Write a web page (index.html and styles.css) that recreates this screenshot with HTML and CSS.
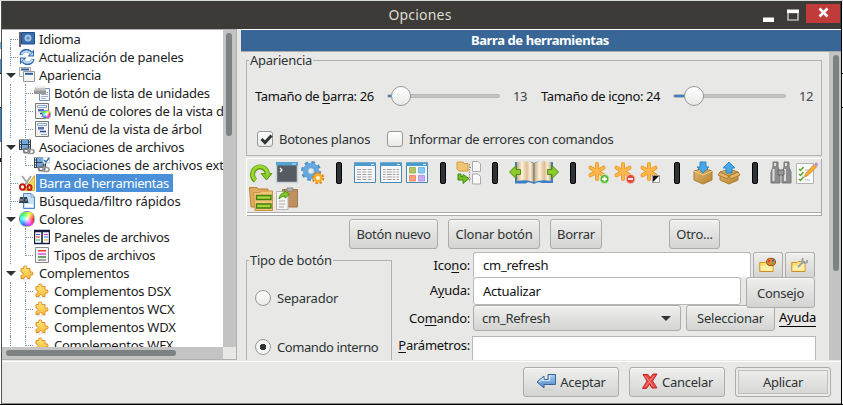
FILE: index.html
```html
<!DOCTYPE html>
<html lang="es">
<head>
<meta charset="utf-8">
<title>Opciones</title>
<link rel="stylesheet" href="styles.css">
</head>
<body>
<svg width="0" height="0" class="defs">
  <defs>
    <linearGradient id="gBlue" x1="0" y1="0" x2="0" y2="1"><stop offset="0" stop-color="#a9cdf0"/><stop offset="1" stop-color="#4d86c6"/></linearGradient>
    <linearGradient id="gGold" x1="0" y1="0" x2="0" y2="1"><stop offset="0" stop-color="#ffe97a"/><stop offset="1" stop-color="#f9bd3a"/></linearGradient>
    <linearGradient id="gBox" x1="0" y1="0" x2="1" y2="1"><stop offset="0" stop-color="#e2b970"/><stop offset="1" stop-color="#b98230"/></linearGradient>
    <linearGradient id="gPage" x1="0" y1="0" x2="1" y2="0"><stop offset="0" stop-color="#d3ae7c"/><stop offset=".3" stop-color="#fbf0dc"/><stop offset=".6" stop-color="#dcbf93"/><stop offset=".8" stop-color="#fbf0dc"/><stop offset="1" stop-color="#cba56e"/></linearGradient>
    <symbol id="puzzle" viewBox="0 0 16 16"><path d="M2.500 3.500H4.500C5 3 4.200 2.500 4.700 1.500Q6.200 .2 7.700 1.500C8.200 2.500 7.300 3 7.800 3.500H11V7C11.500 7.500 12.500 6.500 13.500 7Q14.500 8.500 13.500 10C12.500 10.500 11.500 9.500 11 10V13.500H8.500C8 13 8.500 12.200 7.500 11.700Q6 11.200 5.500 12.200C5.300 13 5.500 13.500 5 13.500H2V10.500C2.500 10 3.500 10.500 4 9.500Q4.300 8 3.500 7.500C2.500 7 2.500 7.500 2 7V3.500Z" fill="url(#gGold)" stroke="#e0882c"/><path d="M2 14.800H12" stroke="#0002"/></symbol>
    <symbol id="film" viewBox="0 0 16 16"><path d="M0 .5H12V11H0Z" fill="#34414d"/><path d="M3 1H9V5H3ZM3 6H9V10.500H3Z" fill="#6fa6dc"/><path d="M1.500 1V11M10.500 1V11" stroke="#eef2f5" stroke-dasharray="1.500 1"/><rect x="4.700" y="9.700" width="6" height="4" rx="2" fill="none" stroke="#777" stroke-width="1.700"/><rect x="9" y="10.500" width="6" height="4" rx="2" fill="none" stroke="#999" stroke-width="1.700"/></symbol>
    <symbol id="treemenu" viewBox="0 0 16 16"><path d="M1.500 .5H14.500V15.500H1.500Z" fill="#f2f2f2" stroke="#777"/><path d="M3.500 2.500H12.500V4.500H3.500Z" fill="#fff" stroke="#8ba5c6"/><path d="M4 7H10M6 10.500H12" stroke="#1f47a8" stroke-width="1.700"/><path d="M4 8.700H10M7 13.500H13" stroke="#9ca5b5"/></symbol>
    <symbol id="wheelmark" viewBox="0 0 26 26"><path d="M12 4V19M5.500 7.700L18.500 15.300M18.500 7.700L5.500 15.300" stroke="#eb9427" stroke-width="4" stroke-linecap="round"/><path d="M12 4V19M5.500 7.700L18.500 15.300M18.500 7.700L5.500 15.300" stroke="#fdb84b" stroke-width="2.500" stroke-linecap="round"/></symbol>
    <symbol id="win" viewBox="0 0 26 26"><path d="M2.500 3H23.500V22.500H2.500Z" fill="#f7f7f7" stroke="#4489b8"/><path d="M2 2.500H24V6H2Z" fill="#4a9acb"/><path d="M19 4.500H22" stroke="#d8ecf8"/></symbol>
    <symbol id="folder" viewBox="0 0 16 16"><path d="M.8 5.500H6L7 4.500H14V14.500H.8Z" fill="url(#gGold)" stroke="#d18b22"/><path d="M1.500 8.500H6L7.500 7H13.500V14H1.500Z" fill="#fff0a6"/></symbol>
  </defs>
</svg>
<div class="desktop">
<div class="window">
  <header class="titlebar">
    <span class="title">Opciones</span>
    <div class="controls">
      <svg class="minmax" width="40" height="28"><path d="M1 16.500H12V21H1Z" fill="#fff"/><path d="M26 11.500H36V19H26Z" fill="none" stroke="#b8b8b5" stroke-width="1.700"/><path d="M25 8.500H37V12H25Z" fill="#fff"/></svg>
      <span class="close"><svg width="34" height="19"><path d="M13.500 4.500L21.500 12.500M21.500 4.500L13.500 12.500" stroke="#fff" stroke-width="2.600"/></svg></span>
    </div>
  </header>
  <div class="main">
    <aside class="sidebar">
      <div class="tree-row">
        <ul class="tree">
          <li class="l1 first"><svg class="ic" viewBox="0 0 16 16"><path d="M1 1V16" stroke="#666" stroke-width="2"/><path d="M2.500 1.500H15.500V13H2.500Z" fill="#376cae" stroke="#1f4e8a"/><circle cx="9" cy="7" r="3.500" fill="#a8c7e8"/><circle cx="9" cy="7" r="1.500" fill="#5384bd"/></svg><span>Idioma</span></li>
          <li class="l1"><svg class="ic" viewBox="0 0 16 16"><path d="M2 6C3 1 9 0 12 4M14 10C13 15 7 16 4 12" fill="none" stroke="#2d65a8" stroke-width="3.400"/><path d="M15 .5V7.500H8.500ZM1 15.500V8.500H7.500Z" fill="#2d65a8"/><path d="M2.500 5.500C4 2 9 1 12 4.500M13.500 10.500C12 14 7 15 4 11.500" fill="none" stroke="#b9d8f5" stroke-width="2"/><path d="M14 3V6.500H10.800ZM2 13V9.500H5.200Z" fill="#b9d8f5"/></svg><span class="sp-wide">Actualización de paneles</span></li>
          <li class="l1 open"><svg class="ic" viewBox="0 0 16 16"><path d="M.5 .5H11.500V9.500H.5Z" fill="#f4f4f2" stroke="#aaa"/><path d="M2 2.500H10" stroke="#2a5c9e" stroke-width="2"/><path d="M4.500 4.500H15.500V14.500H4.500Z" fill="#f4f4f2" stroke="#999"/><path d="M6 6.800H14" stroke="#2a5c9e" stroke-width="2"/></svg><span>Apariencia</span></li>
          <li class="l2"><svg class="ic" viewBox="0 0 16 16"><path d="M5.500 3.500H15.500V15.500H5.500Z" fill="#fff" stroke="#6d8fba"/><path d="M7 7.500H14M7 9.500H14M7 11.500H14M7 13.500H12" stroke="#9fb0c8"/><path d="M2 1H10L12 5V9H0V5Z" fill="#c6c6c4"/><path d="M2 2H10" stroke="#eee" stroke-width="2"/><path d="M0 5.500H12V9H0Z" fill="#999"/></svg><span>Botón de lista de unidades</span></li>
          <li class="l2"><svg class="ic"><use href="#treemenu"/></svg><i class="mini-wheel"></i><span>Menú de colores de la vista de árbol</span></li>
          <li class="l2"><svg class="ic"><use href="#treemenu"/></svg><span class="sp-wide">Menú de la vista de árbol</span></li>
          <li class="l1 open"><svg class="ic"><use href="#film"/></svg><span>Asociaciones de archivos</span></li>
          <li class="l2 only"><svg class="ic" viewBox="0 0 16 16"><use href="#film"/><path d="M9 0H15.500V6H9Z" fill="#fff" stroke="#acc3da"/><path d="M10 3L12 5L15 1" fill="none" stroke="#3269a7" stroke-width="1.300"/></svg><span class="sp-ext">Asociaciones de archivos extra</span></li>
          <li class="l1"><svg class="ic" viewBox="0 0 16 16"><path d="M15.500 .5V15.500H5Z" fill="#f5d765" stroke="#ddb22a"/><path d="M3 1L10 10M12 1L6 10" stroke="#aaa" stroke-width="2"/><ellipse cx="3.500" cy="12" rx="2.500" ry="2.800" fill="none" stroke="#c41a12" stroke-width="2"/><ellipse cx="10.500" cy="12.500" rx="2" ry="2.500" fill="none" stroke="#c41a12" stroke-width="2"/></svg><span class="selected">Barra de herramientas</span></li>
          <li class="l1"><svg class="ic" viewBox="0 0 16 16"><path d="M4.500 .5H12L15.500 4V15.500H4.500Z" fill="#c2e0fb" stroke="#4d8acb"/><path d="M6 12.500H14" stroke="#fff" stroke-width="3"/><path d="M12 .5V4H15.500Z" fill="#fff" stroke="#6da0d4"/><path d="M1 4H4L5 10H0ZM5 4H8L9.500 10H5Z" fill="#39434e"/><path d="M1 7H4M6 7H8" stroke="#adb5bd"/></svg><span class="sp-search">Búsqueda/filtro rápidos</span></li>
          <li class="l1 open"><i class="ic wheel"></i><span>Colores</span></li>
          <li class="l2"><svg class="ic" viewBox="0 0 16 16"><path d="M.5 1.500H15.500V14.500H.5Z" fill="#fff" stroke="#162044" stroke-width="1.400"/><path d="M.5 2.500H15.500M8 2V15" stroke="#162044" stroke-width="1.600"/><path d="M2 5.500H6" stroke="#36c"/><path d="M2 8H6" stroke="#e22"/><path d="M2 11H6" stroke="#2b2"/><path d="M10 5.500H14" stroke="#d3c"/><path d="M10 8H14" stroke="#36c"/><path d="M10 11H14" stroke="#bb2"/></svg><span>Paneles de archivos</span></li>
          <li class="l2 only"><svg class="ic" viewBox="0 0 16 16"><path d="M1.500 .5H14.500V15.500H1.500Z" fill="#f7f7f7" stroke="#888"/><path d="M4 3.800H12" stroke="#e11" stroke-width="1.300"/><path d="M4 7H12" stroke="#d13cdb" stroke-width="1.300"/><path d="M4 10H12" stroke="#187818" stroke-width="1.300"/><path d="M4 13H12" stroke="#555"/></svg><span>Tipos de archivos</span></li>
          <li class="l1 open"><svg class="ic"><use href="#puzzle"/></svg><span>Complementos</span></li>
          <li class="l2"><svg class="ic"><use href="#puzzle"/></svg><span>Complementos DSX</span></li>
          <li class="l2"><svg class="ic"><use href="#puzzle"/></svg><span>Complementos WCX</span></li>
          <li class="l2"><svg class="ic"><use href="#puzzle"/></svg><span>Complementos WDX</span></li>
          <li class="l2"><svg class="ic"><use href="#puzzle"/></svg><span>Complementos WFX</span></li>
        </ul>
        <div class="vbar"><i></i></div>
      </div>
      <div class="hbar"><i></i><b></b></div>
    </aside>
    <section class="pane">
      <h1><span>Barra de herramientas</span></h1>
      <div class="scroll">
        <div class="content">
          <fieldset class="look">
            <legend><span>Apariencia</span></legend>
            <div class="sliders">
              <label class="lab-bar">Tamaño de <u>b</u>arra: 26</label>
              <div class="slider a"><i></i></div><span class="val">13</span>
              <label class="lab-icon">Tamaño de ic<u>o</u>no: 24</label>
              <div class="slider b"><i></i></div><span class="val">12</span>
            </div>
            <div class="checks">
              <i class="box"><svg width="16" height="16"><path d="M3.500 7L7 10.500L13.500 3.500" fill="none" stroke="#2e3436" stroke-width="3"/></svg></i><span class="w-flat">Botones planos</span>
              <i class="box"></i><span class="w-err">Informar de errores con comandos</span>
            </div>
          </fieldset>
          <div class="toolbar">
            <svg viewBox="0 0 26 26"><path d="M7.500 20.500A7.500 7.500 0 1 1 19.500 14" fill="none" stroke="#5f9818" stroke-width="5"/><path d="M13 13.500H24L18.500 20Z" fill="#86c822" stroke="#5f9818"/><path d="M7.500 20A7.500 7.500 0 1 1 19.500 15" fill="none" stroke="#99d62e" stroke-width="3"/></svg>
            <svg viewBox="0 0 26 26"><path d="M2.500 3H23.500V22.500H2.500Z" fill="#555b61" stroke="#c9d0d5" stroke-width="1.500"/><path d="M2 2H24V5.500H2Z" fill="#55a3d3"/><path d="M18 4H22" stroke="#cfe8f8"/><path d="M6 8L8 10L6 12" fill="none" stroke="#fff" stroke-width="1.300"/></svg>
            <svg viewBox="0 0 26 26"><circle cx="11" cy="11" r="8.500" fill="none" stroke="#4b91cc" stroke-width="3" stroke-dasharray="3.500 3.200"/><circle cx="11" cy="11" r="5.500" fill="none" stroke="#66a7dd" stroke-width="5.500"/><circle cx="18" cy="18" r="5" fill="none" stroke="#d98418" stroke-width="2.500" stroke-dasharray="2.200 1.700"/><circle cx="18" cy="18" r="3.300" fill="#fff4d5" stroke="#f9ae2e" stroke-width="2.500"/></svg>
            <i class="sep"></i>
            <svg viewBox="0 0 26 26"><use href="#win"/><path d="M5 9.500H21M5 12H21M5 14.500H21M5 17H21M5 19.500H21" stroke="#a0a0a0" stroke-dasharray="4 1.300"/></svg>
            <svg viewBox="0 0 26 26"><use href="#win"/><path d="M5 9.500H21M5 12H21M5 14.500H21M5 17H21M5 19.500H21" stroke="#a0a0a0" stroke-dasharray="2.500 1.300 5 1"/></svg>
            <svg viewBox="0 0 26 26"><use href="#win"/><path d="M5.500 7.500H11.500V13H5.500Z" fill="#b1c566" stroke="#a2b75a"/><path d="M14.500 7.500H20.500V13H14.500Z" fill="#88c9f5" stroke="#75b8e5"/><path d="M5.500 15.500H11.500V21H5.500Z" fill="#ff9d7c" stroke="#f08c6b"/><path d="M14.500 15.500H20.500V21H14.500Z" fill="#c5aaf5" stroke="#b398e6"/></svg>
            <i class="sep"></i>
            <svg viewBox="0 0 26 26"><path d="M13.500 4V22M13.500 7.500H18M13.500 19H18" stroke="#999" fill="none" stroke-dasharray="1.500 1"/><path d="M1 2H7L8 3.500H12V11H3L1 9Z" fill="#efc571" stroke="#d29d42"/><path d="M16.500 1.500H22L24.500 4V11.500H16.500ZM16.500 14H22L24.500 16.500V24H16.500Z" fill="#f8f8f8" stroke="#aaa"/><path d="M2 14V20H7V23.500L13 18.500L7 14.500V16.500H5V14Z" fill="#74bf26" stroke="#438c10"/></svg>
            <i class="sep"></i>
            <svg viewBox="0 0 26 26"><path d="M7 2H20Q24 1 26 3V24Q20 21 18 23.500H7Z" fill="#3b7fc4"/><path d="M9 2Q20 0 25.500 3V22Q19 19 9 21Z" fill="url(#gPage)"/><path d="M1.500 12L8 5.500V9.500H12.500V14.500H8V18.500Z" fill="#8ccb2c" stroke="#4c8a12"/></svg>
            <svg viewBox="0 0 26 26"><path d="M0 3Q3 1 6 2H19V23H8Q4 21 0 24Z" fill="#3b7fc4"/><path d="M.5 3Q6 0 17 2V21Q7 19 .5 22Z" fill="url(#gPage)"/><path d="M24.500 12L18 5.500V9.500H13.500V14.500H18V18.500Z" fill="#8ccb2c" stroke="#4c8a12"/></svg>
            <i class="sep"></i>
            <svg viewBox="0 0 26 26"><use href="#wheelmark" x="-1" y="0"/><circle cx="18.500" cy="19" r="4.500" fill="#50b62a" stroke="#cfe9c0"/><path d="M16 19H21M18.500 16.500V21.500" stroke="#fff" stroke-width="1.800"/></svg>
            <svg viewBox="0 0 26 26"><use href="#wheelmark" x="-1" y="0"/><circle cx="18.500" cy="19" r="4.500" fill="#e34836" stroke="#f6c4bd"/><path d="M16 19H21" stroke="#fff" stroke-width="1.800"/></svg>
            <svg viewBox="0 0 26 26"><use href="#wheelmark" x="-1" y="0"/><path d="M14.500 15.500H21.500V22.500H14.500Z" fill="#111" stroke="#999"/><path d="M21 16V22H15Z" fill="#fff"/></svg>
            <i class="sep"></i>
            <svg viewBox="0 0 26 26"><path d="M4 11L13 8L22 11V20L13 24L4 20Z" fill="url(#gBox)" stroke="#aa7b30"/><path d="M4 11L13 15L22 11" fill="none" stroke="#f1cf91"/><path d="M10 2H16V7H19L13 13L7 7H10Z" fill="#49a7e5" stroke="#2d87c6"/></svg>
            <svg viewBox="0 0 26 26"><path d="M4 12L13 9L22 12V20L13 24L4 20Z" fill="url(#gBox)" stroke="#aa7b30"/><path d="M4 12L2 15L11 19L13 16L15 19L24 15L22 12L13 16Z" fill="#dfb665" stroke="#ad7c2e"/><path d="M13 2L19 8H16V13H10V8H7Z" fill="#49a7e5" stroke="#2d87c6"/></svg>
            <i class="sep"></i>
            <svg viewBox="0 0 26 26"><path d="M5 2H10V7L12 12V23H3V12L5 7ZM16 2H21V7L23 12V23H14V12L16 7Z" fill="#8c8c8c" stroke="#777"/><path d="M5.500 9V21M17 9V21M7 3V6M18 3V6" stroke="#ddd" stroke-width="2"/><path d="M10 10H16V15H10Z" fill="#999" stroke="#666"/></svg>
            <svg viewBox="0 0 26 26"><path d="M2.500 3.500H19.500V23.500H2.500Z" fill="#fafafa" stroke="#b4b4b4"/><path d="M5 9L6.500 10.500L9.500 7M5 14L6.500 15.500L9.500 12M5 19L6.500 20.500L9.500 17" fill="none" stroke="#58a52a" stroke-width="1.500"/><path d="M11 10H16M11 20H16" stroke="#bbb"/><path d="M10 17L12 13L20 4.500L22.500 7L14 15.500Z" fill="#fbae35" stroke="#c97f1c" stroke-width=".7"/><path d="M20 4.500L22 2L24.500 4.500L22.500 7Z" fill="#bd98d0"/></svg>
            <svg viewBox="0 0 26 26"><path d="M1.500 1.500H9L10 3H20V21H3Z" fill="#dfad60" stroke="#b98134"/><path d="M5.500 6.500H12L13 5H24.500V24.500H7Z" fill="#f0c577" stroke="#cb943f"/><path d="M8.500 9.500H23V13.500H8.500ZM8.500 18H23V22H8.500Z" fill="#a6d63b" stroke="#437d0c" stroke-width="1.300"/></svg>
            <svg viewBox="0 0 26 26"><path d="M8.500 3.500H23.500V21H8.500Z" fill="#c0905f" stroke="#a87747"/><path d="M13 2H19V5H13Z" fill="#bbb" stroke="#888"/><path d="M2.500 5.500H10L14 9V23.500H2.500Z" fill="#f5f5f4" stroke="#b5b5b5"/><path d="M5 15H11M5 18H11M5 21H10" stroke="#aaa"/><path d="M5 13Q6 7 10 7V4.500L15.500 8.500L11 12V10Q8 9.500 5 13Z" fill="#84c829" stroke="#4d9617"/></svg>
          </div>
          <div class="actions">
            <span class="btn b-new"><span>Botón nuevo</span></span><span class="btn b-clone"><span>Clonar botón</span></span><span class="btn b-del"><span>Borrar</span></span><span class="btn b-other"><span>Otro...</span></span>
          </div>
          <div class="editor">
            <fieldset class="kind">
              <legend><span>Tipo de botón</span></legend>
              <div class="radio"><i></i><span>Separador</span></div>
              <div class="radio on"><i></i><span class="w-cmd">Comando interno</span></div>
            </fieldset>
            <div class="form">
              <div class="line r1"><label>Ico<u>n</u>o:</label><span class="input"><span>cm_refresh</span></span><span class="btn sq"><svg width="18" height="16" viewBox="0 0 18 16"><use href="#folder" width="16" height="16"/><ellipse cx="12" cy="5" rx="4.500" ry="3.700" fill="#d98834" stroke="#93501b"/><path d="M9 4H11" stroke="#e22" stroke-width="1.500"/><path d="M13 3.500H15" stroke="#35c" stroke-width="1.300"/><path d="M13 6.500H15" stroke="#5b2" stroke-width="1.500"/></svg></span><span class="btn sq"><svg width="18" height="16" viewBox="0 0 18 16"><use href="#folder" width="16" height="16"/><path d="M7 10L13 4M12 1Q10 5 14 6Q17 6 16 3" fill="none" stroke="#9aa4ab" stroke-width="1.800"/></svg></span></div>
              <div class="line r2"><label>A<u>y</u>uda:</label><span class="input"><span>Actualizar</span></span><span class="btn b-tip"><span>Consejo</span></span></div>
              <div class="line r3"><label>Co<u>m</u>ando:</label><span class="btn combo"><span>cm_Refresh</span><i></i></span><span class="btn b-sel"><span>Seleccionar</span></span><a>Ayuda</a></div>
              <div class="line r4"><label><u>P</u>arámetros:</label><span class="input"></span></div>
            </div>
          </div>
        </div>
        <div class="vbar main-bar"><i></i></div>
      </div>
    </section>
  </div>
  <footer>
    <span class="btn ok"><svg width="21" height="18" viewBox="0 0 21 18"><path d="M1 9L8 3V6.500H12V1.500H19.500V11.500H8V15Z" fill="url(#gBlue)" stroke="#38659e"/><path d="M3 9L7 5.500V7.500H13.500V3H16" fill="none" stroke="#d3e6fa" stroke-width="1.200"/><path d="M6 17H18" stroke="#0001"/></svg><span>Aceptar</span></span>
    <span class="btn no"><svg width="18" height="18" viewBox="0 0 18 18"><path d="M2 1.500H7L9 5L12 1H16L11.500 8L16 15H11L8.500 11L5.500 15.500H1.500L6 8Z" fill="#e84743" stroke="#c32a2a"/><path d="M4 3L12.500 13.500M13 2.500L4.500 13.500" stroke="#f98d85"/></svg><span>Cancelar</span></span>
    <span class="btn apply"><span>Aplicar</span></span>
  </footer>
</div>
</div>
</body>
</html>
```
FILE: styles.css
```css
* { box-sizing: border-box; }
html, body { margin: 0; }
body { width: 843px; height: 405px; overflow: hidden; font: 13px/18px "Noto Sans", sans-serif; color: #2e3436; letter-spacing: -.25px; }
.defs { position: absolute; }
i { font-style: normal; }
u { text-decoration: underline; text-underline-offset: 2px; }
span, label, a { white-space: nowrap; }
.desktop { width: 843px; height: 405px; padding: 1px 1px 1px 1px; background:
  linear-gradient(#d8dcd8, #d8dcd8) 0 0 / 843px 1px no-repeat,
  linear-gradient(#000, #000) 0 404px / 843px 1px no-repeat,
  linear-gradient(#fff 73px, #111 73px 74px, #fff 74px 107px, #111 107px 108px, #fff 108px) 842px 0 / 1px 404px no-repeat,
  linear-gradient(#000, #000) 841px 1px / 1px 403px no-repeat,
  linear-gradient(#fff 42px, #6ab0ee 42px 49px, #fff 49px 59px, #4c8fe0 59px 73px, #111 73px 74px, #fff 74px 107px, #111 107px 108px, #3b83d6 108px 142px, #fff 142px 158px, #112 158px 162px, #fff 162px) 0 0 / 1px 404px no-repeat, #fff; }
.window { width: 840px; height: 403px; display: flex; flex-direction: column; background: #e8e8e6; border-bottom: 1px solid #8b8b89; border-left: 1px solid #4d534f; }
.titlebar { height: 28px; display: flex; background: #3c3b37; color: #dfdbd2; position: relative; }
.title { flex: 1; text-align: center; line-height: 28px; font-size: 14px; letter-spacing: .2px; padding-right: 3px; }
.controls { position: absolute; right: 1px; top: 0; display: flex; }
.minmax { margin-right: 4px; }
.close { width: 34px; height: 19px; margin-top: 3px; background: #c03b3a; }
.close svg { display: block; }
.main { height: 332px; display: flex; gap: 4px; }
.sidebar { width: 235px; height: 331px; border: solid #b0b0ae; border-width: 1px 1px 1px 0; }
.tree-row { height: 317px; display: flex; overflow: hidden; }
.tree { list-style: none; margin: 0; padding: 0; width: 221px; background: #fff; color: #1c1c1c; overflow: hidden; }
.tree li { height: 18px; display: flex; position: relative; align-items: center; }
.l1 { padding-left: 17px; }
.l2 { padding-left: 32px; }
.tree li::before { content: ""; position: absolute; left: 8px; top: 0; bottom: 0; border-left: 1px dotted #7693bb; }
.tree li.first::before { top: 9px; }
.tree .l1:not(.open)::after { content: ""; position: absolute; left: 9px; width: 7px; top: 9px; border-top: 1px dotted #7693bb; }
.tree .l2::after { content: ""; position: absolute; left: 23px; width: 8px; top: 0; bottom: 0; background: linear-gradient(90deg, #7693bb 50%, #0000 0) 0 9px / 2px 1px repeat-x; border-left: 1px dotted #7693bb; }
.tree .l2.only::after { bottom: 8px; }
.tree .open::before { border: solid transparent; border-width: 5px 5px 0; border-top-color: #2d3335; left: 4px; top: 7px; bottom: auto; width: 0; height: 0; }
.ic { width: 16px; height: 16px; margin-right: 3px; flex: none; }
.tree li > span { padding-left: 1px; }
.sp-wide { letter-spacing: -.22px; }
.sp-search { letter-spacing: -.12px; }
.sp-ext { letter-spacing: -.12px; }
.tree .selected { background: #4a90d9; color: #fff; width: 137px; height: 18px; margin-left: -2px; padding-left: 3px; letter-spacing: -.38px; }
.wheel, .mini-wheel { border-radius: 50%; background: radial-gradient(#fff, #fff0 65%), conic-gradient(from 90deg, #f22, #f3f, #36f, #2ff, #3f4, #ff3, #f22); border: 1px solid #9998; }
.mini-wheel { position: absolute; left: 40px; top: 8px; width: 9px; height: 9px; }
.vbar { width: 13px; background: #c3c4c3; padding: 3px 0 0 3px; }
.vbar i { display: block; width: 6px; height: 103px; border-radius: 3px; background: #7c8181; }
.hbar { height: 12px; display: flex; background: #c3c4c3; padding: 3px 0 0 4px; justify-content: space-between; }
.hbar i { width: 170px; height: 6px; border-radius: 3px; background: #7c8181; }
.hbar b { width: 13px; height: 12px; margin-top: -3px; background: #e8e8e6; }
.pane { width: 600px; height: 331px; }
h1 { margin: 0; height: 23px; background: #386696; border-top: 1px solid #fff; border-bottom: 1px solid #aaa; color: #fff; font-size: 13px; line-height: 21px; text-align: center; letter-spacing: -.4px; padding-right: 2px; }
.scroll { height: 308px; display: flex; justify-content: space-between; overflow: hidden; }
.content { width: 582px; padding-left: 5px; height: 308px; overflow: hidden; }
.main-bar { width: 12px; height: 308px; padding-left: 4px; }
.main-bar i { height: 216px; }
fieldset { margin: 0; padding: 0; border: 1px solid #b0b0ae; min-width: 0; }
legend { margin-left: 2px; padding: 0 1px; height: 18px; }
.look { width: 576px; height: 105px; margin-top: -1px; }
.sliders { display: flex; height: 34px; margin-top: 10px; padding-left: 8px; align-items: center; color: #111; }
.lab-bar, .lab-icon { flex: none; width: 132px; letter-spacing: -.36px; }
.slider { flex: none; width: 113px; height: 4px; border-radius: 2px; background: linear-gradient(90deg, #3c7fc9 0 12px, #c4c4c2 12px); border: 1px solid #b8b8b6; position: relative; }
.slider i { position: absolute; top: -9px; left: 3px; width: 20px; height: 20px; border-radius: 50%; border: 1px solid #999; background: linear-gradient(#fff, #e9e9e8); }
.slider.b i { left: 10px; }
.val { flex: none; color: #3f4546; padding-left: 13px; width: 41px; letter-spacing: -.4px; }
.checks { display: flex; align-items: center; margin-top: 16px; padding-left: 10px; height: 20px; }
.box { width: 16px; height: 16px; border: 1px solid #999; border-radius: 3px; background: linear-gradient(#fff, #e8e8e7); margin-right: 6px; }
.box svg { display: block; }
.w-flat { width: 108px; }
.w-err { letter-spacing: -.3px; }
.toolbar { width: 576px; height: 58px; margin-top: 2px; padding: 1px; display: flex; flex-wrap: wrap; align-content: flex-start; border: 1px solid; border-color: #fff #aaa #aaa #fff; border-bottom: 0; background: linear-gradient(#aaa, #aaa) 0 53px / 100% 1px no-repeat, linear-gradient(#fff, #fff) 0 54px / 100% 2px no-repeat, linear-gradient(#aaa, #aaa) 0 56px / 100% 1px no-repeat; }
.toolbar > svg { width: 26px; height: 26px; }
.sep { width: 26px; height: 26px; display: flex; justify-content: center; align-items: center; }
.sep::before { content: ""; width: 4px; height: 20px; border: 1px solid #000; border-radius: 2px; background: #2e3436; }
.actions { display: flex; margin: 3px 0 1px 103px; height: 30px; }
.btn { display: flex; align-items: center; justify-content: center; border: 1px solid #acacaa; border-radius: 3px; background: linear-gradient(#efefed, #d4d4d2); box-shadow: inset 0 1px #f8f8f6; }
.b-new { width: 89px; margin-right: 10px; letter-spacing: -.35px; } .b-clone { width: 92px; margin-right: 10px; } .b-del { width: 52px; margin-right: 67px; } .b-other { width: 51px; }
.editor { display: flex; }
.kind { width: 146px; height: 160px; margin-top: 1px; }
.radio { display: flex; align-items: center; height: 18px; padding-left: 8px; margin-top: 20px; }
.radio + .radio { margin-top: 31px; }
.radio i { width: 16px; height: 16px; border: 1px solid #999; border-radius: 50%; background: linear-gradient(#fff, #e8e8e7); margin-right: 6px; }
.radio.on i { background: radial-gradient(circle, #2e3436 0 3px, #f5f5f4 3.5px); }
.w-cmd { letter-spacing: -.42px; }
.form { width: 425px; padding-top: 2px; }
.line { display: flex; align-items: flex-start; color: #111; }
.line label { width: 78px; text-align: right; margin-right: 3px; line-height: 26px; }
.input { background: #fff; border: 1px solid #b8b8b6; border-radius: 3px; display: flex; align-items: center; padding-left: 9px; color: #111; }
.line .btn { color: #2e3436; }
.r1 { height: 25px; } .r1 .input { width: 278px; height: 25px; border-bottom: 0; margin-right: 2px; }
.r1 .input, .r1 .btn { border-radius: 3px 3px 0 0; border-bottom: 0; }
.sq { width: 30px; height: 25px; margin-right: 2px; }
.r2 { height: 28px; } .r2 .input { width: 268px; height: 28px; margin-right: 5px; } .b-tip { width: 69px; height: 31px; position: relative; z-index: 1; }
.r3 { height: 31px; } .combo { width: 208px; height: 26px; justify-content: space-between; padding: 0 9px 0 8px; margin-right: 5px; } .b-sel { width: 89px; height: 26px; }
.combo i { border: 5px solid transparent; border-top-color: #2e3436; border-bottom: 0; }
.r3 a { color: #000; border-bottom: 1px solid #000; margin: 4px 0 0 4px; line-height: 17px; }
.r4 label { line-height: 18px; } .r4 .input { width: 344px; height: 40px; border-radius: 0; margin-left: -1px; }
footer { height: 42px; border-top: 1px solid #fff; display: flex; gap: 10px; justify-content: flex-end; padding: 5px 10px 0 0; }
footer .btn { width: 96px; height: 30px; gap: 3px; }
footer .apply { box-shadow: inset 0 0 0 2px #eaeae8, inset 0 0 0 3px #c0c0be; }
```
